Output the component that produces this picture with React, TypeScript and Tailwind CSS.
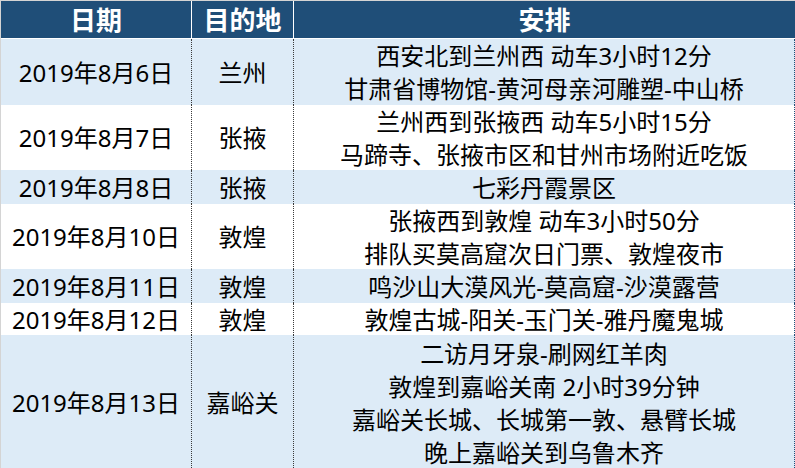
import React from "react";

type Row = { date: string; place: string; lines: string[]; h: string; blue: boolean };

const rows: Row[] = [
  { date: "2019年8月6日", place: "兰州", lines: ["西安北到兰州西 动车3小时12分", "甘肃省博物馆-黄河母亲河雕塑-中山桥"], h: "h-[66px]", blue: true },
  { date: "2019年8月7日", place: "张掖", lines: ["兰州西到张掖西 动车5小时15分", "马蹄寺、张掖市区和甘州市场附近吃饭"], h: "h-[65px]", blue: false },
  { date: "2019年8月8日", place: "张掖", lines: ["七彩丹霞景区"], h: "h-[34px]", blue: true },
  { date: "2019年8月10日", place: "敦煌", lines: ["张掖西到敦煌 动车3小时50分", "排队买莫高窟次日门票、敦煌夜市"], h: "h-[65px]", blue: false },
  { date: "2019年8月11日", place: "敦煌", lines: ["鸣沙山大漠风光-莫高窟-沙漠露营"], h: "h-[34px]", blue: true },
  { date: "2019年8月12日", place: "敦煌", lines: ["敦煌古城-阳关-玉门关-雅丹魔鬼城"], h: "h-[32px]", blue: false },
  {
    date: "2019年8月13日",
    place: "嘉峪关",
    lines: ["二访月牙泉-刷网红羊肉", "敦煌到嘉峪关南 2小时39分钟", "嘉峪关长城、长城第一敦、悬臂长城", "晚上嘉峪关到乌鲁木齐"],
    h: "h-[135px]",
    blue: true,
  },
];

export default function App() {
  return (
    <div
      className="w-[795px] h-[468px] overflow-hidden bg-[#d4d4d4] pl-px pt-px text-black"
      style={{ fontFamily: '"Noto Sans", "Noto Sans CJK SC", sans-serif' }}
    >
      <div className="flex h-[37px] bg-[#1F4E78] text-white font-bold text-[26px] leading-none">
        <div className="w-[191px] border-r border-white flex items-center justify-center">日期</div>
        <div className="w-[102px] border-r border-white flex items-center justify-center">目的地</div>
        <div className="flex-1 flex items-center justify-center">安排</div>
      </div>
      <div className="h-px bg-white" />
      {rows.map((r, i) => (
        <div key={i} className={`flex ${r.h} ${r.blue ? "bg-[#DDEBF7]" : "bg-white"} text-[24px] leading-[33px]`}>
          <div className="w-[191px] border-r border-dotted border-[#3a3a3a] flex items-center justify-center">{r.date}</div>
          <div className="w-[102px] border-r border-dotted border-[#3a3a3a] flex items-center justify-center">{r.place}</div>
          <div className="w-[501px] border-r border-dotted border-[#1F4E78] flex flex-col items-center justify-center">
            {r.lines.map((l, j) => (
              <div key={j} className="whitespace-nowrap">{l}</div>
            ))}
          </div>
        </div>
      ))}
    </div>
  );
}
